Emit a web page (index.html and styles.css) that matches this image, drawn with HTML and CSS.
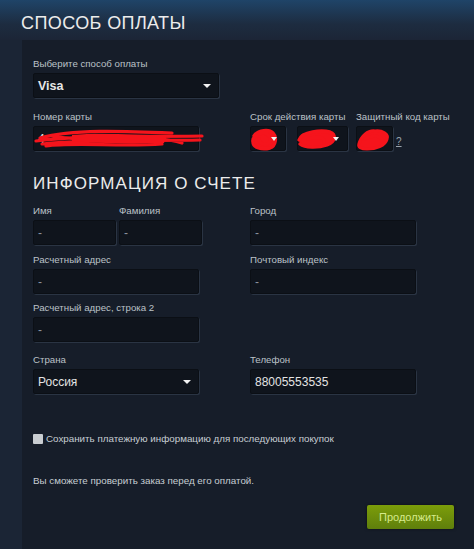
FILE: index.html
```html
<!DOCTYPE html>
<html lang="ru">
<head>
    <meta charset="UTF-8">
    <meta name="viewport" content="width=device-width, initial-scale=1.0">
    <title>Способ оплаты</title>
    <link rel="stylesheet" href="styles.css">
</head>
<body>
    <div class="page-head">
        <h1>СПОСОБ ОПЛАТЫ</h1>
    </div>

    <div class="panel">
        <!-- Способ оплаты -->
        <div class="group">
            <div class="label">Выберите способ оплаты</div>
            <div class="field select w-method"><span class="value bold">Visa</span><span class="arrow"></span></div>
        </div>

        <div class="row card-row">
            <div class="group w-left">
                <div class="label">Номер карты</div>
                <div class="field w-left scribbled">
                    <span class="value">4</span>
                    <svg class="scribble" width="180" height="24" viewBox="0 0 180 24">
                        <path d="M8 11 C40 2 90 4 140 6 M4 14 C50 8 110 10 170 9 M10 17 C60 12 120 14 168 13 M20 9 C70 18 120 6 150 16 M14 19 C40 15 90 20 130 17" stroke="#f5141c" stroke-width="3.2" fill="none" stroke-linecap="round"/>
                        <path d="M40 8 C70 5 100 8 135 8 L132 16 C90 17 60 16 40 14 Z" fill="#f5141c"/>
                    </svg>
                </div>
            </div>
            <div class="group expiry">
                <div class="label">Срок действия карты</div>
                <div class="row tight">
                    <div class="field select w-month scribbled">
                        <svg class="scribble" width="36" height="24" viewBox="0 0 36 24">
                            <path d="M5 9 C9 3 20 2 24 6 C28 10 27 19 21 21 C13 23 4 21 4 15 C3 11 8 6 14 6 C20 6 23 11 20 16 C16 19 10 17 10 12" stroke="#f5141c" stroke-width="3.4" fill="#f5141c" stroke-linecap="round"/>
                        </svg>
                        <span class="arrow small"></span>
                    </div>
                    <div class="field select w-year scribbled">
                        <svg class="scribble" width="50" height="24" viewBox="0 0 50 24">
                            <path d="M3 13 C6 4 26 3 34 5 C40 7 40 15 31 18 C22 21 9 21 4 17 M7 8 C18 3 34 3 37 8 M12 12 C20 9 30 10 28 15" stroke="#f5141c" stroke-width="3.4" fill="#f5141c" stroke-linecap="round"/>
                        </svg>
                        <span class="arrow small"></span>
                    </div>
                </div>
            </div>
            <div class="group cvv">
                <div class="label">Защитный код карты</div>
                <div class="row tight">
                    <div class="field w-cvv scribbled">
                        <svg class="scribble" width="36" height="24" viewBox="0 0 36 24">
                            <path d="M4 17 C6 9 13 3 20 4 C27 3 34 7 32 12 C30 19 21 22 12 22 C6 22 3 20 4 17 M10 12 C16 8 25 8 27 13" stroke="#f5141c" stroke-width="3.2" fill="#f5141c" stroke-linecap="round"/>
                        </svg>
                    </div>
                    <a class="help">?</a>
                </div>
            </div>
        </div>

        <!-- Информация о счете -->
        <h2>ИНФОРМАЦИЯ О СЧЕТЕ</h2>

        <div class="row cols first">
            <div class="row tight name-row">
                <div class="group">
                    <div class="label">Имя</div>
                    <div class="field w-name"><span class="value dim">-</span></div>
                </div>
                <div class="group">
                    <div class="label">Фамилия</div>
                    <div class="field w-name"><span class="value dim">-</span></div>
                </div>
            </div>
            <div class="group">
                <div class="label">Город</div>
                <div class="field w-left"><span class="value dim">-</span></div>
            </div>
        </div>

        <div class="row cols">
            <div class="group">
                <div class="label">Расчетный адрес</div>
                <div class="field w-left"><span class="value dim">-</span></div>
            </div>
            <div class="group">
                <div class="label">Почтовый индекс</div>
                <div class="field w-left"><span class="value dim">-</span></div>
            </div>
        </div>

        <div class="row cols third">
            <div class="group">
                <div class="label">Расчетный адрес, строка 2</div>
                <div class="field w-left"><span class="value dim">-</span></div>
            </div>
        </div>

        <div class="row cols country-row">
            <div class="group">
                <div class="label">Страна</div>
                <div class="field select w-left"><span class="value big">Россия</span><span class="arrow"></span></div>
            </div>
            <div class="group">
                <div class="label">Телефон</div>
                <div class="field w-left"><span class="value big">88005553535</span></div>
            </div>
        </div>

        <label class="save">
            <span class="check"></span>
            Сохранить платежную информацию для последующих покупок
        </label>

        <p class="note">Вы сможете проверить заказ перед его оплатой.</p>

        <div class="actions">
            <button class="btn-green">Продолжить</button>
        </div>
    </div>
</body>
</html>
```

FILE: styles.css
```css
body {
    margin: 0;
    background: #1b2535;
    font-family: "Liberation Sans", Arial, sans-serif;
    color: #c6d4df;
    width: 474px;
    height: 549px;
    overflow: hidden;
}

.page-head {
    height: 40px;
    padding-left: 21px;
    background: linear-gradient(to bottom, #1f4468 0%, #1d2c40 60%, #1c2536 100%);
    box-sizing: border-box;
}

h1 {
    margin: 0;
    padding-top: 12px;
    font-size: 18px;
    font-weight: normal;
    letter-spacing: 0.4px;
    line-height: 22px;
    color: #ececec;
}

.panel {
    margin-left: 22px;
    height: 509px;
    background: #161d29;
    padding: 17px 0 0 11px;
    box-sizing: border-box;
}

.row {
    display: flex;
}

.row.tight {
    gap: 3px;
    align-items: center;
}

.label {
    font-size: 9.7px;
    line-height: 13px;
    color: #bcc2c8;
    margin-bottom: 3px;
    white-space: nowrap;
}

.field {
    position: relative;
    height: 25px;
    box-sizing: border-box;
    background: #0f141c;
    border: 1px solid #0b0f15;
    border-radius: 2px;
    box-shadow: 1px 1px 0 #2a3443;
    display: flex;
    align-items: center;
    padding-left: 4px;
}

.value {
    font-size: 12px;
    color: #e6e6e6;
}

.value.bold {
    font-weight: bold;
    font-size: 12.5px;
}

.value.dim {
    color: #8c959e;
    font-size: 12px;
}

.value.big {
    font-size: 12px;
    color: #e3e3e3;
}

.arrow {
    position: absolute;
    right: 7px;
    top: 10px;
    width: 0;
    height: 0;
    border-left: 4px solid transparent;
    border-right: 4px solid transparent;
    border-top: 4px solid #f2f2f2;
}

.arrow.small {
    right: 8px;
    top: 10px;
    border-left-width: 3px;
    border-right-width: 3px;
}

.w-method { width: 186px; }
.w-left { width: 166px; }
.w-name { width: 83px; }
.w-month { width: 36px; }
.w-year { width: 51px; }
.w-cvv { width: 37px; }

.scribble {
    position: absolute;
    left: -2px;
    top: 0;
}

.card-row {
    margin-top: 12px;
}

.expiry {
    margin-left: 51px;
}

.expiry .row.tight {
    gap: 11px;
}

.cvv {
    margin-left: 8px;
}

.help {
    color: #9aa4ad;
    font-size: 10px;
    text-decoration: underline;
    margin-top: 6px;
}

h2 {
    margin: 22px 0 0;
    font-size: 17px;
    font-weight: normal;
    letter-spacing: 1.1px;
    line-height: 22px;
    color: #ececec;
}

.cols {
    gap: 51px;
    margin-top: 8px;
}

.cols.first {
    margin-top: 9px;
    gap: 48px;
}

.cols.third {
    margin-top: 7px;
}

.country-row {
    margin-top: 11px;
}

.save {
    display: flex;
    align-items: center;
    margin-top: 38px;
    font-size: 9.8px;
    color: #c6cdd3;
    line-height: 14px;
}

.check {
    width: 10px;
    height: 10px;
    background: #c9cdd1;
    border-radius: 1px;
    margin-right: 3px;
}

.note {
    margin: 28px 0 0;
    font-size: 9.8px;
    line-height: 14px;
    color: #c6cdd3;
}

.actions {
    display: flex;
    justify-content: flex-end;
    padding-right: 20px;
    margin-top: 17px;
}

.btn-green {
    width: 87px;
    height: 24px;
    border: none;
    border-radius: 2px;
    background: linear-gradient(to bottom, #7c9d0a 0%, #5f7f0c 100%);
    color: #d6ea8a;
    font-family: "Liberation Sans", Arial, sans-serif;
    font-size: 11px;
    padding: 0;
    box-shadow: 0 0 3px rgba(0, 0, 0, 0.5);
}
```
